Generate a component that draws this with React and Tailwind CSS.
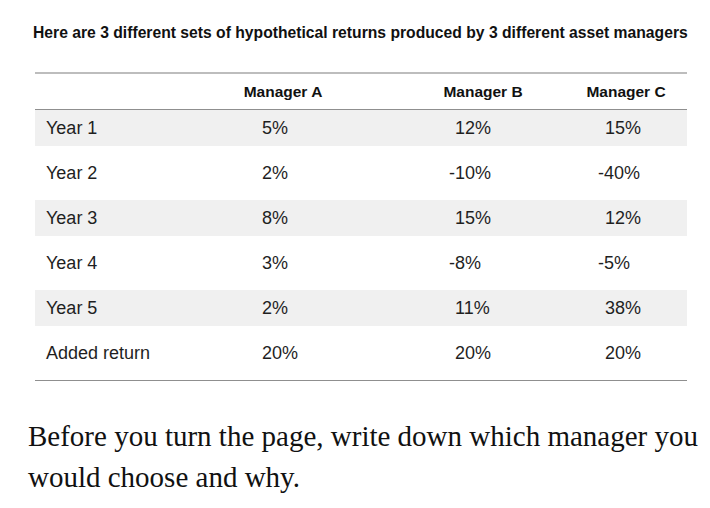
import React from 'react';

const rows = [
  { label: 'Year 1', a: '5%', b: '12%', c: '15%', shaded: true },
  { label: 'Year 2', a: '2%', b: '-10%', c: '-40%' },
  { label: 'Year 3', a: '8%', b: '15%', c: '12%', shaded: true },
  { label: 'Year 4', a: '3%', b: '-8%', c: '-5%' },
  { label: 'Year 5', a: '2%', b: '11%', c: '38%', shaded: true },
  { label: 'Added return', a: '20%', b: '20%', c: '20%' },
];

// negative numbers hang the minus sign out to the left
const isNeg = (v) => v.startsWith('-');

const Row = ({ row }) => (
  <div className={`flex items-center h-[36px] text-[18px] text-[#1f1f1f] ${row.shaded ? 'bg-[#f0f0f0]' : ''}`}>
    <div className="w-[198px] pl-[11px]">{row.label}</div>
    <div className="w-[200px] pl-[29px]">{row.a}</div>
    <div className={`w-[143px] ${isNeg(row.b) ? 'pl-[16px]' : 'pl-[22px]'}`}>{row.b}</div>
    <div className={`w-[111px] ${isNeg(row.c) ? 'pl-[22px]' : 'pl-[29px]'}`}>{row.c}</div>
  </div>
);

export default function App() {
  return (
    <div className="w-[710px] h-[508px] bg-white pt-[24px]" style={{ fontFamily: '"Liberation Sans", Arial, sans-serif' }}>
      <h1 className="pl-[33px] text-[15.7px] leading-[18px] font-bold text-[#111] whitespace-nowrap">
        Here are 3 different sets of hypothetical returns produced by 3 different asset managers
      </h1>

      {/* Returns table */}
      <div className="mx-[35px] mt-[30px] w-[652px] border-t-2 border-[#bdbdbd]">
        <div className="flex items-center h-[36px] border-b border-[#8f8f8f] text-[15.5px] font-bold text-[#111]">
          <div className="w-[198px]" />
          <div className="w-[200px]"><div className="w-[100px] text-center">Manager A</div></div>
          <div className="w-[143px]"><div className="w-[100px] text-center">Manager B</div></div>
          <div className="w-[111px]"><div className="w-[100px] text-center">Manager C</div></div>
        </div>
        <div className="flex flex-col gap-[9px] pb-[9px] border-b border-[#8f8f8f]">
          {rows.map((row) => (
            <Row key={row.label} row={row} />
          ))}
        </div>
      </div>

      <p className="mt-[35px] pl-[28px] pr-[4px] text-[29px] leading-[41px] text-[#111]" style={{ fontFamily: '"Liberation Serif", "Times New Roman", serif' }}>
        Before you turn the page, write down which manager you would choose and why.
      </p>
    </div>
  );
}
